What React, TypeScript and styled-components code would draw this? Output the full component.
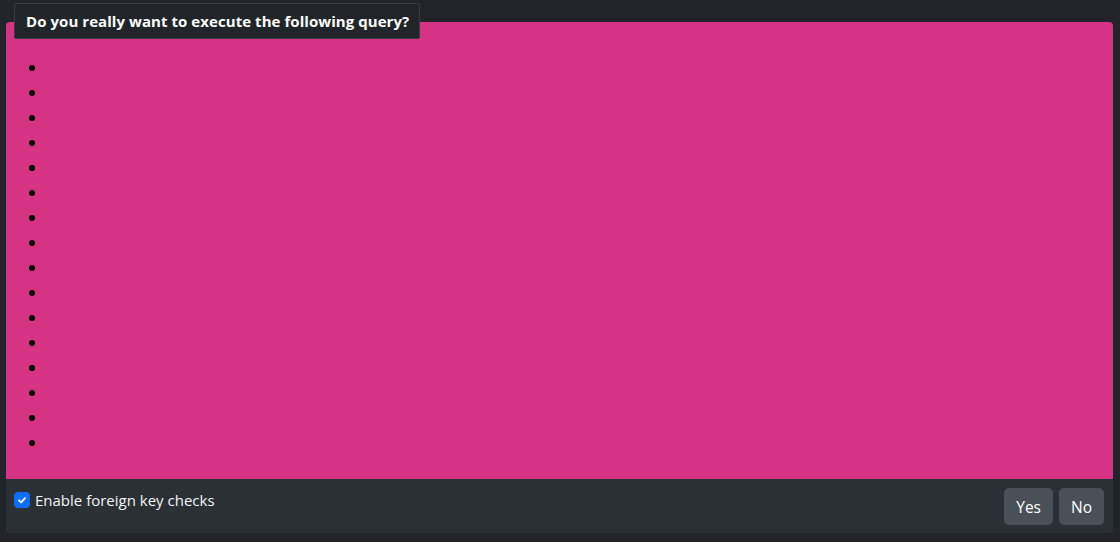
import * as React from 'react';
import styled, { createGlobalStyle } from 'styled-components';

const GlobalStyle = createGlobalStyle`
  html, body {
    margin: 0;
    padding: 0;
    background: #212529;
    color: #dee2e6;
    font-family: 'Open Sans', 'Noto Sans', sans-serif;
  }
`;

const Page = styled.div`
  width: 1120px;
  height: 542px;
  box-sizing: border-box;
  padding: 22px 7px 9px 6px;
  background: #212529;
`;

const Card = styled.div`
  position: relative;
  height: 100%;
  display: flex;
  flex-direction: column;
  border-radius: 4px;
  background: #2b3035;
`;

// sits over the top edge of the query panel, like a fieldset legend
const Legend = styled.div`
  position: absolute;
  left: 8px;
  top: -19px;
  height: 36px;
  box-sizing: border-box;
  padding: 0 10px 0 11px;
  display: flex;
  align-items: center;
  background: #212529;
  border: 1px solid #383d42;
  border-radius: 2px;
  color: #ffffff;
  font-weight: 700;
  font-size: 15px;
  letter-spacing: 0.06px;
  z-index: 2;
`;

const QueryPanel = styled.div`
  flex: 1;
  background: #d63384;
  border-radius: 4px 4px 0 0;
  padding: 33px 0 0 0;
  overflow: hidden;
`;

const QueryList = styled.ul`
  margin: 0;
  padding: 0 0 0 41px;
  color: #000;
  font-size: 16px;
  line-height: 25px;
`;

const QueryItem = styled.li`
  height: 25px;
`;

const Footer = styled.div`
  height: 54px;
  flex: none;
  box-sizing: border-box;
  display: flex;
  align-items: flex-start;
  justify-content: space-between;
  padding: 9px 9px 8px 8px;
`;

const CheckLabel = styled.label`
  display: flex;
  align-items: center;
  gap: 5px;
  margin-top: 2px;
  font-size: 15px;
  color: #f1f3f5;
`;

const CheckBox = styled.span<{ $checked: boolean }>`
  width: 16px;
  height: 16px;
  border-radius: 4px;
  display: inline-flex;
  align-items: center;
  justify-content: center;
  background: ${p => (p.$checked ? '#0d6efd' : 'transparent')};
  border: 1px solid ${p => (p.$checked ? '#0d6efd' : '#6c757d')};
  box-sizing: border-box;
`;

const ButtonGroup = styled.div`
  display: flex;
  gap: 6px;
`;

const Button = styled.button`
  height: 37px;
  padding: 0 12px;
  border: none;
  border-radius: 5px;
  background: #495057;
  color: #ffffff;
  font-family: 'Open Sans', 'Noto Sans', sans-serif;
  font-size: 15.5px;
  cursor: pointer;
`;

const App = () => {
  const [fkChecks, setFkChecks] = React.useState(true);
  const items = Array.from({ length: 16 }, (_, i) => i);

  return (
    <Page>
      <GlobalStyle />
      <Card>
        <Legend>Do you really want to execute the following query?</Legend>
        <QueryPanel>
          <QueryList>
            {items.map(i => (
              <QueryItem key={i} />
            ))}
          </QueryList>
        </QueryPanel>
        <Footer>
          <CheckLabel onClick={() => setFkChecks(!fkChecks)}>
            <CheckBox $checked={fkChecks}>
              {fkChecks && (
                <svg width="12" height="12" viewBox="0 0 20 20">
                  <path d="M5 10.5l3.5 3.5 6.5-7" fill="none" stroke="#fff" strokeWidth="3" strokeLinecap="round" strokeLinejoin="round" />
                </svg>
              )}
            </CheckBox>
            Enable foreign key checks
          </CheckLabel>
          <ButtonGroup>
            <Button>Yes</Button>
            <Button>No</Button>
          </ButtonGroup>
        </Footer>
      </Card>
    </Page>
  );
};

export default App;
